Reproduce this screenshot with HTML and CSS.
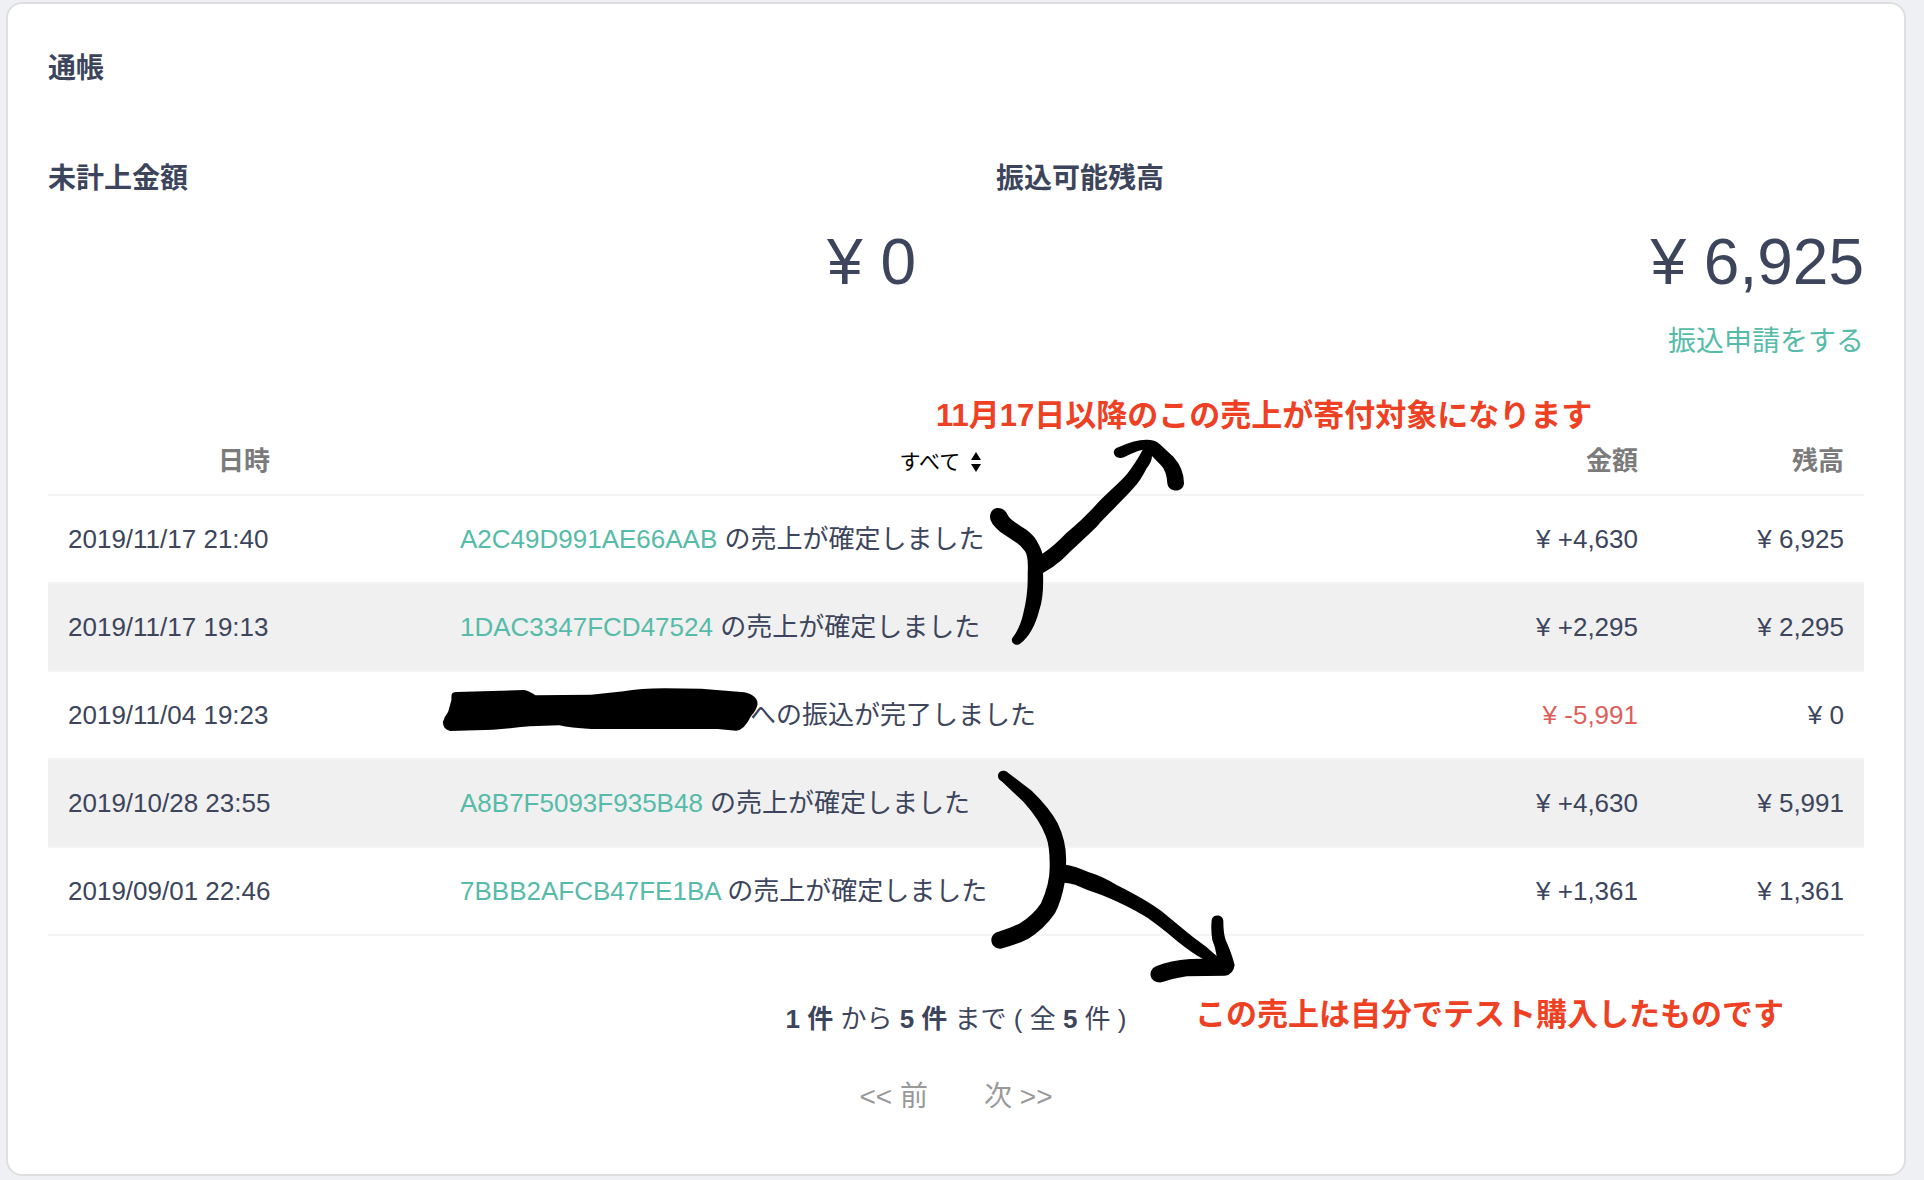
FILE: index.html
```html
<!DOCTYPE html>
<html lang="ja">
<head>
<meta charset="utf-8">
<title>通帳</title>
<link rel="stylesheet" href="styles.css">
</head>
<body>
<main class="card">
  <h1 class="heading">通帳</h1>

  <div class="balances">
    <section class="balance">
      <h2 class="heading">未計上金額</h2>
      <p class="amount">¥ 0</p>
    </section>
    <section class="balance">
      <h2 class="heading">振込可能残高</h2>
      <p class="amount">¥ 6,925</p>
      <a class="transfer" href="#transfer">振込申請をする</a>
    </section>
  </div>

  <table class="ledger">
    <colgroup>
      <col class="col-date"><col><col class="col-amount"><col class="col-balance">
    </colgroup>
    <thead>
      <tr>
        <th scope="col">日時</th>
        <th scope="col">
          <span class="filter">
            <select class="filter-select" aria-label="種別">
              <option>すべて</option>
            </select>
            <svg class="filter-arrows" viewBox="0 0 10 20" aria-hidden="true"><path d="M5 0 10 8H0zM0 12h10L5 20z"/></svg>
          </span>
        </th>
        <th scope="col" class="num">金額</th>
        <th scope="col" class="num">残高</th>
      </tr>
    </thead>
    <tbody>
      <tr>
        <td>2019/11/17 21:40</td>
        <td><a href="#A2C49D991AE66AAB">A2C49D991AE66AAB</a> の売上が確定しました</td>
        <td class="num">¥ +4,630</td>
        <td class="num">¥ 6,925</td>
      </tr>
      <tr>
        <td>2019/11/17 19:13</td>
        <td><a href="#1DAC3347FCD47524">1DAC3347FCD47524</a> の売上が確定しました</td>
        <td class="num">¥ +2,295</td>
        <td class="num">¥ 2,295</td>
      </tr>
      <tr>
        <td>2019/11/04 19:23</td>
        <td class="masked"><span class="mask-space"></span>への振込が完了しました
          <svg class="mask" viewBox="50 81 784 138" preserveAspectRatio="none" aria-hidden="true"><path d="M78 108Q78 96 90 96L255 90Q268 92 284 106L420 104Q460 100 500 94Q540 85 600 85L690 86L795 97Q828 106 828 132Q826 150 812 168Q795 212 775 212L730 207H420Q370 204 342 196L270 199Q220 205 180 209L75 213Q57 208 57 186Q62 168 70 155L78 120Z"/></svg>
        </td>
        <td class="num minus">¥ -5,991</td>
        <td class="num">¥ 0</td>
      </tr>
      <tr>
        <td>2019/10/28 23:55</td>
        <td><a href="#A8B7F5093F935B48">A8B7F5093F935B48</a> の売上が確定しました</td>
        <td class="num">¥ +4,630</td>
        <td class="num">¥ 5,991</td>
      </tr>
      <tr>
        <td>2019/09/01 22:46</td>
        <td><a href="#7BBB2AFCB47FE1BA">7BBB2AFCB47FE1BA</a> の売上が確定しました</td>
        <td class="num">¥ +1,361</td>
        <td class="num">¥ 1,361</td>
      </tr>
    </tbody>
  </table>

  <p class="summary"><b>1 件</b> から <b>5 件</b> まで ( 全 <b>5</b> 件 )</p>
  <nav class="pager" aria-label="ページ">
    <a href="#prev">&lt;&lt; 前</a>
    <a href="#next">次 &gt;&gt;</a>
  </nav>

  <p class="note note-sales">11月17日以降のこの売上が寄付対象になります</p>
  <p class="note note-test">この売上は自分でテスト購入したものです</p>
  <svg class="mark mark-sales" viewBox="378 168 600 636" aria-hidden="true"><path d="M390 412C390 376 432 376 443 405C455 430 510 445 530 482Q545 508 547 521Q580 500 620 458C660 425 690 395 715 367C750 330 790 300 810 270Q835 235 848 209Q815 218 792 232C762 243 750 208 775 202Q820 180 860 179Q885 179 898 191L940 230Q972 265 972 310C970 340 925 338 922 310Q920 275 905 258L876 228Q876 245 860 265Q840 305 820 325C780 370 740 405 710 440C680 470 640 505 605 540Q580 562 549 579Q552 650 538 690Q520 760 482 790C468 802 450 788 457 774Q480 745 490 700Q505 640 503 580Q506 530 495 514Q482 495 465 485L420 455Q390 430 390 412Z"/></svg>
  <svg class="mark mark-test" viewBox="84 84 750 654" aria-hidden="true"><path d="M114 108C114 92 134 88 144 98L215 152Q270 205 293 250Q322 310 318 374Q345 378 385 396Q430 410 470 435Q560 480 605 514Q660 560 700 592Q740 620 770 648Q766 620 757 600Q752 570 755 540C758 522 788 522 790 542Q790 580 797 600Q815 640 824 675Q820 704 795 707L680 709Q640 715 605 727C565 730 562 688 590 678Q630 662 690 657L728 656Q700 642 650 602Q600 560 560 532Q500 495 425 465Q380 450 345 434Q330 429 314 428Q305 480 285 520Q250 570 205 596Q170 614 122 626C88 626 84 582 115 575Q150 565 180 550Q220 525 243 490Q270 430 269 380Q270 320 258 290Q240 240 190 185L125 124Q114 118 114 108Z"/></svg>
</main>
</body>
</html>
```
FILE: styles.css
```css
* {
  box-sizing: border-box;
}

body {
  margin: 0;
  padding: 2px 18px 4px 6px;
  background: #eff0f4;
  color: #3c455c;
  font-family: "Liberation Sans", "Noto Sans CJK JP", sans-serif;
  font-size: 26px;
  line-height: 40px;
}

a {
  color: #56bba8;
  text-decoration: none;
}

h1,
h2,
p {
  margin: 0;
}

.card {
  position: relative;
  padding: 42px 40px 57px;
  border: 2px solid #dddedd;
  border-radius: 16px;
  background: #fff;
}

.heading {
  font-size: 28px;
  line-height: 46px;
}

.balances {
  display: grid;
  grid-template-columns: 1fr 1fr;
  column-gap: 80px;
  margin-top: 64px;
}

.balance {
  display: flex;
  flex-direction: column;
}

.amount {
  margin-top: 20px;
  font-size: 64px;
  line-height: 80px;
  text-align: right;
}

.transfer {
  align-self: flex-end;
  margin-top: 20px;
  font-size: 28px;
}

/* Ledger */
.ledger {
  width: 100%;
  margin-top: 64px;
  border-collapse: separate;
  border-spacing: 0;
  table-layout: fixed;
}

.col-date {
  width: 392px;
}

.col-amount {
  width: 218px;
}

.col-balance {
  width: 206px;
}

.ledger th,
.ledger td {
  padding: 0 20px;
  border-bottom: 2px solid #f4f4f4;
  white-space: nowrap;
}

.ledger th {
  height: 70px;
  padding-top: 2px;
  color: #7b7b7b;
}

.ledger td {
  height: 88px;
}

.ledger .num {
  text-align: right;
}

.ledger tbody tr:nth-child(even) {
  background: #f0f0f0;
}

.ledger .minus {
  color: #dd605b;
}

.filter {
  display: inline-flex;
  align-items: center;
  gap: 8px;
  vertical-align: middle;
}

.filter-select {
  padding: 0;
  border: 0;
  appearance: none;
  background: none;
  color: #000;
  font: 21px/40px "Liberation Sans", "Noto Sans CJK JP", sans-serif;
}

.filter-arrows {
  width: 10px;
  height: 20px;
}

.masked {
  position: relative;
}

.mask-space {
  display: inline-block;
  width: 290px;
}

.mask {
  position: absolute;
  top: 15px;
  left: 0;
  width: 320px;
  height: 46px;
}

/* Paging */
.summary {
  margin-top: 63px;
  text-align: center;
}

.pager {
  display: flex;
  justify-content: center;
  gap: 56px;
  margin-top: 38px;
  font-size: 28px;
}

.pager a {
  color: #999;
}

/* Handwritten marks and notes over the ledger */
.note {
  position: absolute;
  color: #ee4023;
  font-size: 31px;
  font-weight: bold;
  white-space: nowrap;
}

.note-sales {
  top: 392px;
  left: 928px;
}

.note-test {
  top: 991px;
  left: 1187px;
}

.mark {
  position: absolute;
}

.mark-sales {
  top: 432px;
  left: 978px;
  width: 200px;
  height: 212px;
}

.mark-test {
  top: 764px;
  left: 980px;
  width: 250px;
  height: 218px;
}
```
